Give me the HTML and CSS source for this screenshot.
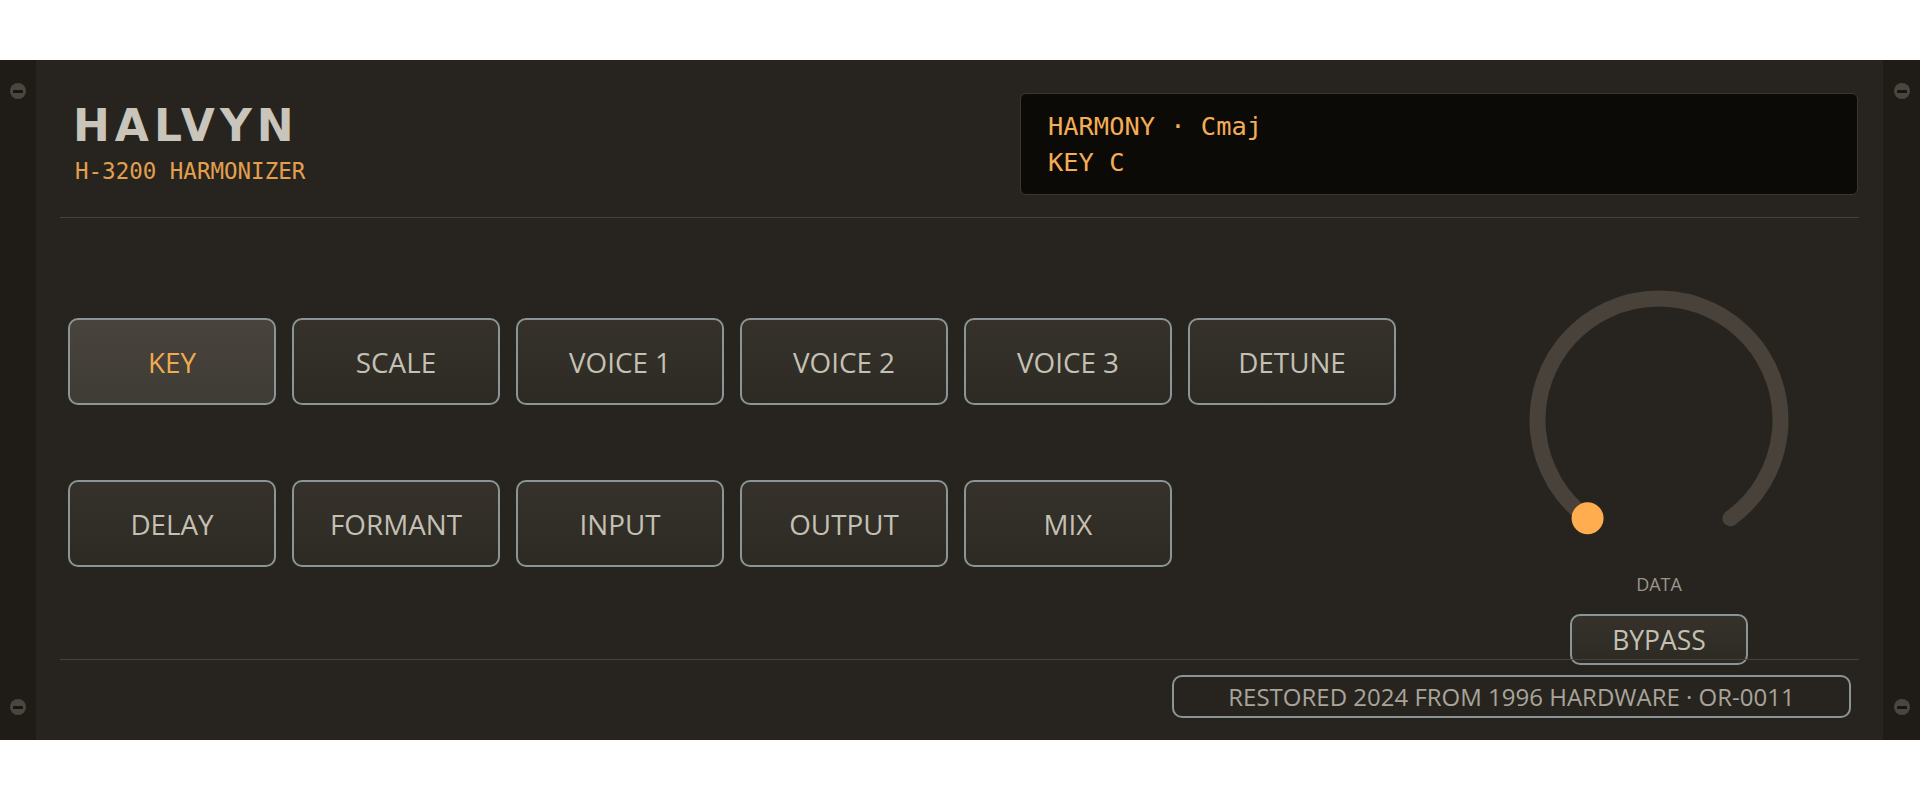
FILE: index.html
```html
<!DOCTYPE html>
<html lang="en">
<head>
<meta charset="utf-8">
<title>HALVYN H-3200 Harmonizer</title>
<link rel="stylesheet" href="styles.css">
</head>
<body>
<div class="rack">
  <div class="rail">
    <span class="screw"></span>
    <span class="screw"></span>
  </div>
  <div class="face">
    <header class="head">
      <div class="brand">
        <div class="brand-name">HALVYN</div>
        <div class="brand-model">H-3200 HARMONIZER</div>
      </div>
      <div class="lcd">
        <div class="lcd-line">HARMONY · Cmaj</div>
        <div class="lcd-line">KEY C</div>
      </div>
    </header>
    <section class="controls">
      <div class="keys">
        <button class="key is-active">KEY</button>
        <button class="key">SCALE</button>
        <button class="key">VOICE 1</button>
        <button class="key">VOICE 2</button>
        <button class="key">VOICE 3</button>
        <button class="key">DETUNE</button>
        <button class="key">DELAY</button>
        <button class="key">FORMANT</button>
        <button class="key">INPUT</button>
        <button class="key">OUTPUT</button>
        <button class="key">MIX</button>
      </div>
      <div class="dial">
        <svg class="dial-svg" width="260" height="260" viewBox="0 0 260 260">
          <path d="M 58.58 228.3 A 121.5 121.5 0 1 1 201.42 228.3" fill="none" stroke="#48423a" stroke-width="16" stroke-linecap="round"/>
          <circle cx="58.58" cy="228.3" r="16" fill="#ffad4e"/>
        </svg>
        <div class="dial-label">DATA</div>
        <button class="bypass">BYPASS</button>
      </div>
    </section>
    <footer class="foot">
      <div class="plate">RESTORED 2024 FROM 1996 HARDWARE · OR-0011</div>
    </footer>
  </div>
  <div class="rail">
    <span class="screw"></span>
    <span class="screw"></span>
  </div>
</div>
</body>
</html>
```
FILE: styles.css
```css
html, body {
  margin: 0;
  padding: 0;
}
body {
  background: #ffffff;
  height: 800px;
  display: flex;
  align-items: center;
  font-family: "Open Sans", "Noto Sans", sans-serif;
}
.rack {
  width: 1920px;
  height: 680px;
  display: flex;
  background: #27241f;
}
.rail {
  width: 36px;
  flex: 0 0 36px;
  background: #1f1c18;
  display: flex;
  flex-direction: column;
  justify-content: space-between;
  align-items: center;
  padding: 23px 0 25px;
  box-sizing: border-box;
}
.rail:last-child {
  flex-basis: 37px;
  width: 37px;
}
.screw {
  width: 16px;
  height: 16px;
  border-radius: 50%;
  background: #4a463e;
  display: flex;
  align-items: center;
  justify-content: center;
}
.screw::after {
  content: "";
  width: 10px;
  height: 3px;
  background: #181613;
  border-radius: 1px;
}
.face {
  flex: 1;
  padding: 0 24px;
  display: flex;
  flex-direction: column;
}
.head {
  display: flex;
  justify-content: space-between;
  align-items: center;
  padding: 33px 0 22px;
  border-bottom: 1px solid #46423a;
}
.brand {
  padding-left: 13px;
}
.brand-name {
  font-family: "DejaVu Sans", sans-serif;
  font-weight: 700;
  font-size: 44px;
  line-height: 44px;
  letter-spacing: 5px;
  color: #c9c5bb;
}
.brand-model {
  margin-top: 10px;
  padding-left: 2px;
  font-family: "DejaVu Sans Mono", monospace;
  font-size: 22.5px;
  line-height: 26px;
  color: #e2a04e;
}
.lcd {
  width: 838px;
  box-sizing: border-box;
  margin-right: 1px;
  padding: 14px 27px;
  background: #0c0a07;
  border: 1px solid #3b372f;
  border-radius: 6px;
  font-family: "DejaVu Sans Mono", monospace;
  font-size: 25.4px;
  line-height: 36px;
  color: #f5ad55;
}
.controls {
  height: 441px;
  display: flex;
  align-items: flex-start;
  padding-top: 72px;
  box-sizing: border-box;
}
.keys {
  margin: 28px 0 0 8px;
  display: grid;
  grid-template-columns: repeat(6, 208px);
  grid-auto-rows: 87px;
  column-gap: 16px;
  row-gap: 75px;
}
.key {
  font-family: "Open Sans", "Noto Sans", sans-serif;
  font-size: 27.8px;
  color: #c4c0b4;
  background: linear-gradient(180deg, #36322b, #2d2a24);
  border: 2px solid #8a9595;
  border-radius: 10px;
  padding: 0;
  margin: 0;
}
.key.is-active {
  color: #f3a94f;
  background: linear-gradient(180deg, #48443d, #3f3b35);
}
.dial {
  margin-left: auto;
  margin-right: 70px;
  width: 260px;
  display: flex;
  flex-direction: column;
  align-items: center;
}
.dial-svg {
  display: block;
}
.dial-label {
  margin-top: 22px;
  font-size: 18px;
  line-height: 24px;
  color: #9a968c;
}
.bypass {
  margin-top: 18px;
  width: 178px;
  height: 51px;
  padding: 0;
  font-family: "Open Sans", "Noto Sans", sans-serif;
  font-size: 26.5px;
  color: #c4c0b4;
  background: linear-gradient(180deg, #36322b, #2d2a24);
  border: 2px solid #8a9595;
  border-radius: 10px;
}
.foot {
  border-top: 1px solid #46423a;
  display: flex;
  justify-content: flex-end;
  padding: 15px 8px 0 0;
}
.plate {
  width: 679px;
  height: 43px;
  box-sizing: border-box;
  display: flex;
  align-items: center;
  justify-content: center;
  border: 2px solid #8a9595;
  border-radius: 10px;
  font-size: 24px;
  color: #a8a49a;
}
```
